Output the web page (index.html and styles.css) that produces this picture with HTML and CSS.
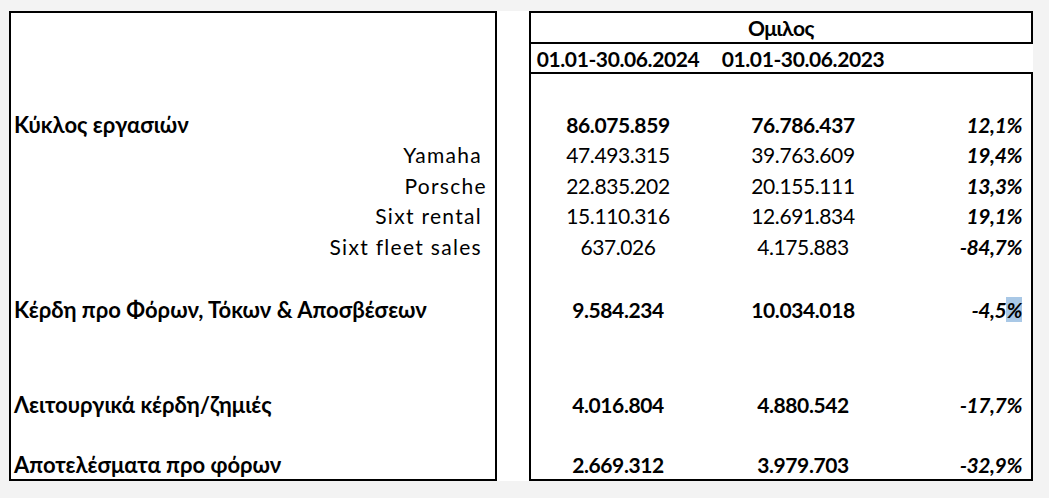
FILE: index.html
```html
<!DOCTYPE html>
<html lang="el">
<head>
<meta charset="utf-8">
<title>Ομιλος</title>
<link rel="stylesheet" href="styles.css">
</head>
<body>
<div class="page">
  <div class="sheet">
    <div class="box left">
      <div class="spacer s-top"></div>
      <div class="row r30 label main">Κύκλος εργασιών</div>
      <div class="row r31 label sub">Yamaha</div>
      <div class="row r30 label sub porsche">Porsche</div>
      <div class="row r31 label sub">Sixt rental</div>
      <div class="row r31 label sub">Sixt fleet sales</div>
      <div class="spacer s32"></div>
      <div class="row r30 label main">Κέρδη προ Φόρων, Τόκων &amp; Αποσβέσεων</div>
      <div class="spacer s65"></div>
      <div class="row r30 label main">Λειτουργικά κέρδη/ζημιές</div>
      <div class="spacer s30"></div>
      <div class="row r30 label main">Αποτελέσματα προ φόρων</div>
    </div>
    <div class="right">
      <div class="box head1">Ομιλος</div>
      <div class="head2">
        <div class="c1">01.01-30.06.2024</div>
        <div class="c2">01.01-30.06.2023</div>
      </div>
      <div class="box body">
        <div class="spacer s35"></div>
        <div class="row r30 bold">
          <div class="c1">86.075.859</div><div class="c2">76.786.437</div><div class="c3 it">12,1%</div>
        </div>
        <div class="row r31">
          <div class="c1">47.493.315</div><div class="c2">39.763.609</div><div class="c3 it">19,4%</div>
        </div>
        <div class="row r30">
          <div class="c1">22.835.202</div><div class="c2">20.155.111</div><div class="c3 it">13,3%</div>
        </div>
        <div class="row r31">
          <div class="c1">15.110.316</div><div class="c2">12.691.834</div><div class="c3 it">19,1%</div>
        </div>
        <div class="row r31">
          <div class="c1">637.026</div><div class="c2">4.175.883</div><div class="c3 it">-84,7%</div>
        </div>
        <div class="spacer s32"></div>
        <div class="row r30 bold">
          <div class="c1">9.584.234</div><div class="c2">10.034.018</div><div class="c3 it">-4,5<span class="sel">%</span></div>
        </div>
        <div class="spacer s65"></div>
        <div class="row r30 bold">
          <div class="c1">4.016.804</div><div class="c2">4.880.542</div><div class="c3 it">-17,7%</div>
        </div>
        <div class="spacer s30"></div>
        <div class="row r30 bold">
          <div class="c1">2.669.312</div><div class="c2">3.979.703</div><div class="c3 it">-32,9%</div>
        </div>
      </div>
    </div>
  </div>
</div>
</body>
</html>
```
FILE: styles.css
```css
* { box-sizing: border-box; }
html, body { margin: 0; padding: 0; }
body {
  background: #f3f3f3;
  font-family: "Lato", "Open Sans", "DejaVu Sans", sans-serif;
  font-size: 21px;
  color: #000;
  letter-spacing: -0.4px;
}
.page {
  padding: 11px 0 0 9px;
  height: 498px;
}
.sheet {
  display: flex;
  gap: 32px;
  width: 1024px;
  background: #fff;
}
.box { border: 2px solid #000; }
.left {
  width: 488px;
  height: 470px;
  display: flex;
  flex-direction: column;
}
.right {
  width: 504px;
  display: flex;
  flex-direction: column;
}
.head1 {
  height: 33px;
  font-weight: 700;
  display: flex;
  align-items: center;
  justify-content: center;
}
.head2 {
  height: 28px;
  border-left: 2px solid #000;
  display: flex;
  align-items: center;
  font-weight: 700;
}
.body {
  height: 409px;
  display: flex;
  flex-direction: column;
}
.spacer { flex: none; }
.s-top { height: 96px; }
.s35 { height: 35px; }
.s32 { height: 32px; }
.s65 { height: 65px; }
.s30 { height: 30px; }
.row {
  flex: none;
  display: flex;
  align-items: center;
}
.r30 { height: 30px; }
.r31 { height: 31px; }
.label.main {
  font-weight: 700;
  font-size: 22px;
  letter-spacing: 0;
  padding-left: 3px;
}
.label.sub {
  justify-content: flex-end;
  padding-right: 13px;
  letter-spacing: 1.3px;
}
.label.sub.porsche { padding-right: 8px; }
.c1 { width: 174px; text-align: center; }
.c2 { width: 196px; text-align: center; }
.c3 {
  flex: 1;
  text-align: right;
  padding-right: 9px;
  font-weight: 700;
}
.bold { font-weight: 700; }
.it { font-style: italic; }
.sel { background: #a9c8e6; }
```
